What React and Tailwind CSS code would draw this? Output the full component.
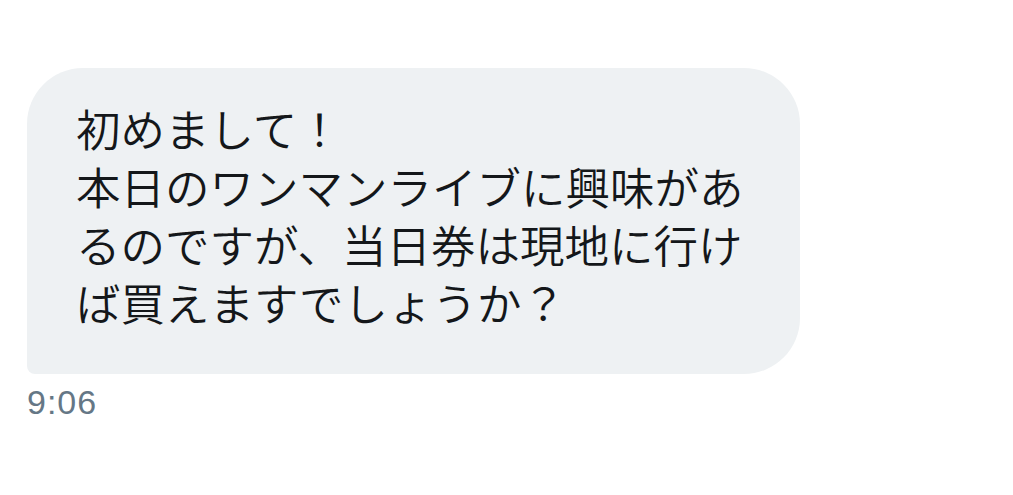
export default function App() {
  return (
    <div className="flex h-[495px] w-[1013px] flex-col items-start bg-white pl-[27px] pt-[68px]">
      <div className="w-[773px] rounded-[56px] rounded-bl-[8px] bg-[#eef1f3] pb-[43px] pl-[49px] pr-[40px] pt-[31px] font-['Noto_Sans_CJK_JP','Noto_Sans',sans-serif] text-[44.5px] font-[350] leading-[58px] text-[#14171a]">
        <p>初めまして！</p>
        <p>本日のワンマンライブに興味があ</p>
        <p>るのですが、当日券は現地に行け</p>
        <p>ば買えますでしょうか？</p>
      </div>
      <div className="mt-[8px] font-['Liberation_Sans',Arial,sans-serif] text-[34px] leading-[40px] tracking-[1px] text-[#657786]">
        9:06
      </div>
    </div>
  );
}
